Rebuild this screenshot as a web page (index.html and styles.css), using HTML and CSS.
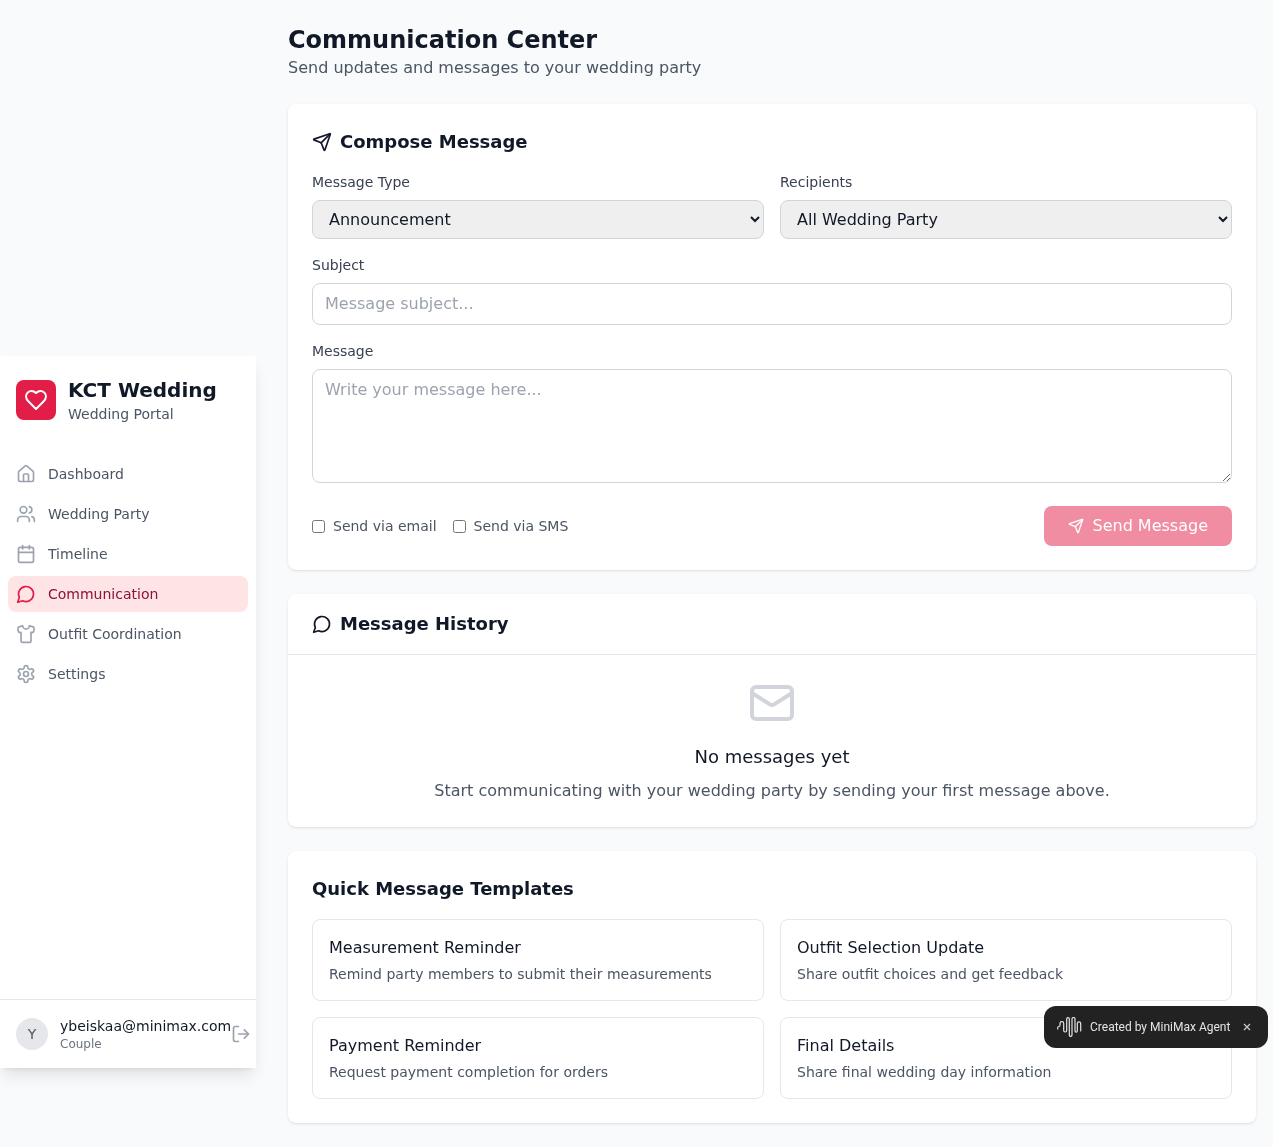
FILE: index.html
```html
<!DOCTYPE html>
<html lang="en">
<head>
  <meta charset="UTF-8">
  <meta name="viewport" content="width=device-width, initial-scale=1.0">
  <title>Communication Center</title>
  <link rel="stylesheet" href="styles.css">
</head>
<body>
  <div class="layout">
    <aside class="sidebar">
      <div class="brand">
        <div class="brand-logo">
          <svg class="icon icon-24" viewBox="0 0 24 24"><path d="M19 14c1.49-1.46 3-3.21 3-5.5A5.5 5.5 0 0 0 16.5 3c-1.76 0-3 .5-4.5 2-1.5-1.5-2.74-2-4.5-2A5.5 5.5 0 0 0 2 8.5c0 2.3 1.5 4.05 3 5.5l7 7Z"/></svg>
        </div>
        <div>
          <div class="brand-name">KCT Wedding</div>
          <div class="brand-sub">Wedding Portal</div>
        </div>
      </div>

      <nav class="nav">
        <a class="nav-item" href="#">
          <svg class="icon" viewBox="0 0 24 24"><path d="M15 21v-8a1 1 0 0 0-1-1h-4a1 1 0 0 0-1 1v8"/><path d="M3 10a2 2 0 0 1 .709-1.528l7-5.999a2 2 0 0 1 2.582 0l7 5.999A2 2 0 0 1 21 10v9a2 2 0 0 1-2 2H5a2 2 0 0 1-2-2z"/></svg>
          Dashboard
        </a>
        <a class="nav-item" href="#">
          <svg class="icon" viewBox="0 0 24 24"><path d="M16 21v-2a4 4 0 0 0-4-4H6a4 4 0 0 0-4 4v2"/><circle cx="9" cy="7" r="4"/><path d="M22 21v-2a4 4 0 0 0-3-3.87"/><path d="M16 3.13a4 4 0 0 1 0 7.75"/></svg>
          Wedding Party
        </a>
        <a class="nav-item" href="#">
          <svg class="icon" viewBox="0 0 24 24"><path d="M8 2v4"/><path d="M16 2v4"/><rect x="3" y="4" width="18" height="18" rx="2"/><path d="M3 10h18"/></svg>
          Timeline
        </a>
        <a class="nav-item active" href="#">
          <svg class="icon" viewBox="0 0 24 24"><path d="M7.9 20A9 9 0 1 0 4 16.1L2 22Z"/></svg>
          Communication
        </a>
        <a class="nav-item" href="#">
          <svg class="icon" viewBox="0 0 24 24"><path d="M20.38 3.46 16 2a4 4 0 0 1-8 0L3.62 3.46a2 2 0 0 0-1.34 2.23l.58 3.47a1 1 0 0 0 .99.84H6v10c0 1.1.9 2 2 2h8a2 2 0 0 0 2-2V10h2.15a1 1 0 0 0 .99-.84l.58-3.47a2 2 0 0 0-1.34-2.23z"/></svg>
          Outfit Coordination
        </a>
        <a class="nav-item" href="#">
          <svg class="icon" viewBox="0 0 24 24"><path d="M12.22 2h-.44a2 2 0 0 0-2 2v.18a2 2 0 0 1-1 1.73l-.43.25a2 2 0 0 1-2 0l-.15-.08a2 2 0 0 0-2.73.73l-.22.38a2 2 0 0 0 .73 2.73l.15.1a2 2 0 0 1 1 1.72v.51a2 2 0 0 1-1 1.74l-.15.09a2 2 0 0 0-.73 2.73l.22.38a2 2 0 0 0 2.73.73l.15-.08a2 2 0 0 1 2 0l.43.25a2 2 0 0 1 1 1.73V20a2 2 0 0 0 2 2h.44a2 2 0 0 0 2-2v-.18a2 2 0 0 1 1-1.73l.43-.25a2 2 0 0 1 2 0l.15.08a2 2 0 0 0 2.73-.73l.22-.39a2 2 0 0 0-.73-2.73l-.15-.08a2 2 0 0 1-1-1.74v-.5a2 2 0 0 1 1-1.74l.15-.09a2 2 0 0 0 .73-2.73l-.22-.38a2 2 0 0 0-2.73-.73l-.15.08a2 2 0 0 1-2 0l-.43-.25a2 2 0 0 1-1-1.73V4a2 2 0 0 0-2-2z"/><circle cx="12" cy="12" r="3"/></svg>
          Settings
        </a>
      </nav>

      <div class="user">
        <div class="user-info">
          <div class="avatar">Y</div>
          <div>
            <div class="user-email">ybeiskaa@minimax.com</div>
            <div class="user-role">Couple</div>
          </div>
        </div>
        <svg class="icon logout" viewBox="0 0 24 24"><path d="M9 21H5a2 2 0 0 1-2-2V5a2 2 0 0 1 2-2h4"/><polyline points="16 17 21 12 16 7"/><line x1="21" y1="12" x2="9" y2="12"/></svg>
      </div>
    </aside>

    <main class="main">
      <header class="page-head">
        <h1>Communication Center</h1>
        <p>Send updates and messages to your wedding party</p>
      </header>

      <section class="card card-pad">
        <h2 class="card-title">
          <svg class="icon" viewBox="0 0 24 24"><path d="M14.536 21.686a.5.5 0 0 0 .937-.024l6.5-19a.496.496 0 0 0-.635-.635l-19 6.5a.5.5 0 0 0-.024.937l7.93 3.18a2 2 0 0 1 1.112 1.11z"/><path d="m21.854 2.147-10.94 10.939"/></svg>
          Compose Message
        </h2>
        <div class="form-row">
          <div>
            <label class="field-label" for="messageType">Message Type</label>
            <select class="field-select" id="messageType">
              <option>Announcement</option>
              <option>Reminder</option>
            </select>
          </div>
          <div>
            <label class="field-label" for="recipients">Recipients</label>
            <select class="field-select" id="recipients">
              <option>All Wedding Party</option>
              <option>Groomsmen</option>
            </select>
          </div>
        </div>
        <div class="field">
          <label class="field-label" for="subject">Subject</label>
          <input class="field-input" id="subject" type="text" placeholder="Message subject...">
        </div>
        <div class="field">
          <label class="field-label" for="message">Message</label>
          <textarea class="field-input field-area" id="message" rows="4" placeholder="Write your message here..."></textarea>
        </div>
        <div class="form-foot">
          <div class="checks">
            <label class="check"><input type="checkbox"> Send via email</label>
            <label class="check"><input type="checkbox"> Send via SMS</label>
          </div>
          <button class="send-btn" type="button" disabled>
            <svg class="icon icon-16" viewBox="0 0 24 24"><path d="M14.536 21.686a.5.5 0 0 0 .937-.024l6.5-19a.496.496 0 0 0-.635-.635l-19 6.5a.5.5 0 0 0-.024.937l7.93 3.18a2 2 0 0 1 1.112 1.11z"/><path d="m21.854 2.147-10.94 10.939"/></svg>
            Send Message
          </button>
        </div>
      </section>

      <section class="card">
        <div class="history-head">
          <h2 class="card-title no-margin">
            <svg class="icon" viewBox="0 0 24 24"><path d="M7.9 20A9 9 0 1 0 4 16.1L2 22Z"/></svg>
            Message History
          </h2>
        </div>
        <div class="empty">
          <svg class="icon icon-48" viewBox="0 0 24 24"><rect x="2" y="4" width="20" height="16" rx="2"/><path d="m22 7-8.97 5.7a1.94 1.94 0 0 1-2.06 0L2 7"/></svg>
          <h3>No messages yet</h3>
          <p>Start communicating with your wedding party by sending your first message above.</p>
        </div>
      </section>

      <section class="card card-pad">
        <h2 class="card-title">Quick Message Templates</h2>
        <div class="templates">
          <div class="template">
            <h4>Measurement Reminder</h4>
            <p>Remind party members to submit their measurements</p>
          </div>
          <div class="template">
            <h4>Outfit Selection Update</h4>
            <p>Share outfit choices and get feedback</p>
          </div>
          <div class="template">
            <h4>Payment Reminder</h4>
            <p>Request payment completion for orders</p>
          </div>
          <div class="template">
            <h4>Final Details</h4>
            <p>Share final wedding day information</p>
          </div>
        </div>
      </section>
    </main>
  </div>

  <div class="agent-badge">
    <svg class="wave" viewBox="0 0 26 20"><path d="M.7 12V11Q.7 9.500 1.850 9.500Q3 9.500 3 8V6.500A1.850 1.850 0 0 1 6.700 6.500V13.500A1.500 1.500 0 0 0 9.700 13.500V2A1.300 1.300 0 0 1 12.300 2V18A1.350 1.350 0 0 0 15 18V2A1.500 1.500 0 0 1 18 2V14A1.150 1.150 0 0 0 20.300 14V6.500A1.700 1.700 0 0 1 23.700 6.500V14"/></svg>
    <span>Created by MiniMax Agent</span>
    <svg class="badge-close" viewBox="0 0 8 8"><path d="M1 1l6 6M7 1l-6 6"/></svg>
  </div>
</body>
</html>
```

FILE: styles.css
```css
* {
  margin: 0;
  padding: 0;
  box-sizing: border-box;
}

body {
  background-color: #f9fafb;
  color: #111827;
  font-family: 'DejaVu Sans', sans-serif;
}

.layout {
  display: flex;
  align-items: flex-start;
  will-change: transform;
}

.icon {
  width: 20px;
  height: 20px;
  flex-shrink: 0;
  fill: none;
  stroke: currentColor;
  stroke-width: 2;
  stroke-linecap: round;
  stroke-linejoin: round;
}

.icon-16 {
  width: 16px;
  height: 16px;
}

.icon-24 {
  width: 24px;
  height: 24px;
}

.icon-48 {
  width: 48px;
  height: 48px;
  color: #d1d5db;
}

/* Sidebar */
.sidebar {
  width: 256px;
  height: 712px;
  margin-top: 356px;
  flex-shrink: 0;
  display: flex;
  flex-direction: column;
  background-color: #fff;
  box-shadow: 0 10px 15px -3px rgba(0, 0, 0, 0.1), 0 4px 6px -4px rgba(0, 0, 0, 0.1);
}

.brand {
  display: flex;
  align-items: center;
  gap: 12px;
  padding: 20px 16px 32px;
}

.brand-logo {
  width: 40px;
  height: 40px;
  display: flex;
  align-items: center;
  justify-content: center;
  background-color: #e11d48;
  border-radius: 8px;
  color: #fff;
}

.brand-name {
  font-size: 20px;
  line-height: 28px;
  font-weight: 700;
}

.brand-sub {
  font-size: 14px;
  line-height: 20px;
  color: #4b5563;
}

.nav {
  flex: 1;
  display: flex;
  flex-direction: column;
  gap: 4px;
  padding: 0 8px;
}

.nav-item {
  display: flex;
  align-items: center;
  gap: 12px;
  padding: 8px;
  border-radius: 8px;
  font-size: 14px;
  line-height: 20px;
  color: #4b5563;
  text-decoration: none;
}

.nav-item .icon {
  color: #9ca3af;
}

.nav-item.active {
  background-color: #ffe4e6;
  color: #881337;
}

.nav-item.active .icon {
  color: #e11d48;
}

.user {
  display: flex;
  align-items: center;
  justify-content: space-between;
  padding: 16px;
  border-top: 1px solid #e5e7eb;
}

.user-info {
  display: flex;
  align-items: center;
  gap: 12px;
  white-space: nowrap;
}

.avatar {
  width: 32px;
  height: 32px;
  display: flex;
  align-items: center;
  justify-content: center;
  background-color: #e5e7eb;
  border-radius: 50%;
  font-size: 14px;
  color: #4b5563;
}

.user-email {
  font-size: 14px;
  line-height: 20px;
}

.user-role {
  font-size: 12px;
  line-height: 16px;
  color: #6b7280;
}

.logout {
  color: #9ca3af;
}

/* Main column */
.main {
  flex: 1;
  min-width: 0;
  display: flex;
  flex-direction: column;
  gap: 24px;
  padding: 24px 17px 24px 32px;
}

.page-head h1 {
  font-size: 24px;
  line-height: 32px;
  font-weight: 700;
}

.page-head p {
  font-size: 16px;
  line-height: 24px;
  color: #4b5563;
}

.card {
  background-color: #fff;
  border-radius: 8px;
  box-shadow: 0 1px 3px rgba(0, 0, 0, 0.1), 0 1px 2px -1px rgba(0, 0, 0, 0.1);
}

.card-pad {
  padding: 24px;
}

.card-title {
  display: flex;
  align-items: center;
  gap: 8px;
  margin-bottom: 16px;
  font-size: 18px;
  line-height: 28px;
  font-weight: 700;
}

.no-margin {
  margin-bottom: 0;
}

/* Compose form */
.form-row {
  display: grid;
  grid-template-columns: 1fr 1fr;
  gap: 16px;
  margin-bottom: 16px;
}

.field {
  margin-bottom: 16px;
}

.field-label {
  display: block;
  margin-bottom: 8px;
  font-size: 14px;
  line-height: 20px;
  color: #374151;
}

.field-select {
  display: block;
  width: 100%;
  height: 39px;
  padding: 8px 12px;
  background-color: #efefef;
  border: 1px solid #d1d5db;
  border-radius: 8px;
  font-family: inherit;
  font-size: 16px;
  color: #111827;
}

.field-input {
  display: block;
  width: 100%;
  padding: 8px 12px;
  border: 1px solid #d1d5db;
  border-radius: 8px;
  font-family: inherit;
  font-size: 16px;
  line-height: 24px;
  color: #111827;
}

.field-input::placeholder {
  color: #9ca3af;
}

.field-area {
  height: 114px;
  margin-bottom: 23px;
}

.form-foot {
  display: flex;
  align-items: center;
  justify-content: space-between;
}

.checks {
  display: flex;
  align-items: center;
  gap: 16px;
}

.check {
  display: flex;
  align-items: center;
  gap: 8px;
  font-size: 14px;
  line-height: 20px;
  color: #4b5563;
}

.check input {
  width: 13px;
  height: 13px;
}

.send-btn {
  display: flex;
  align-items: center;
  gap: 8px;
  padding: 8px 24px;
  background-color: #e11d48;
  border: none;
  border-radius: 8px;
  color: #fff;
  font-family: inherit;
  font-size: 16px;
  line-height: 24px;
  opacity: 0.5;
}

/* History */
.history-head {
  padding: 16px 24px;
  border-bottom: 1px solid #e5e7eb;
}

.empty {
  padding: 24px;
  text-align: center;
}

.empty .icon {
  display: block;
  margin: 0 auto 16px;
}

.empty h3 {
  margin-bottom: 8px;
  font-size: 18px;
  line-height: 28px;
  font-weight: 500;
}

.empty p {
  font-size: 16px;
  line-height: 24px;
  color: #4b5563;
}

/* Templates */
.templates {
  display: grid;
  grid-template-columns: 1fr 1fr;
  gap: 16px;
}

.template {
  padding: 16px;
  border: 1px solid #e5e7eb;
  border-radius: 8px;
}

.template h4 {
  margin-bottom: 4px;
  font-size: 16px;
  line-height: 24px;
  font-weight: 500;
}

.template p {
  font-size: 14px;
  line-height: 20px;
  color: #4b5563;
}

/* Floating badge */
.agent-badge {
  position: fixed;
  left: 1044px;
  top: 1006px;
  width: 224px;
  height: 42px;
  display: flex;
  align-items: center;
  padding: 0 17px 0 13px;
  background-color: #222;
  border-radius: 12px;
  font-family: Roboto, sans-serif;
  font-size: 12px;
  color: #e5e5e5;
  will-change: transform;
}

.wave {
  width: 26px;
  height: 20px;
  margin-right: 7px;
  fill: none;
  stroke: #e5e5e5;
  stroke-width: 1.2;
  stroke-linecap: round;
}

.badge-close {
  width: 8px;
  height: 8px;
  margin-left: auto;
  fill: none;
  stroke: #c8c8c8;
  stroke-width: 1.3;
}
```
